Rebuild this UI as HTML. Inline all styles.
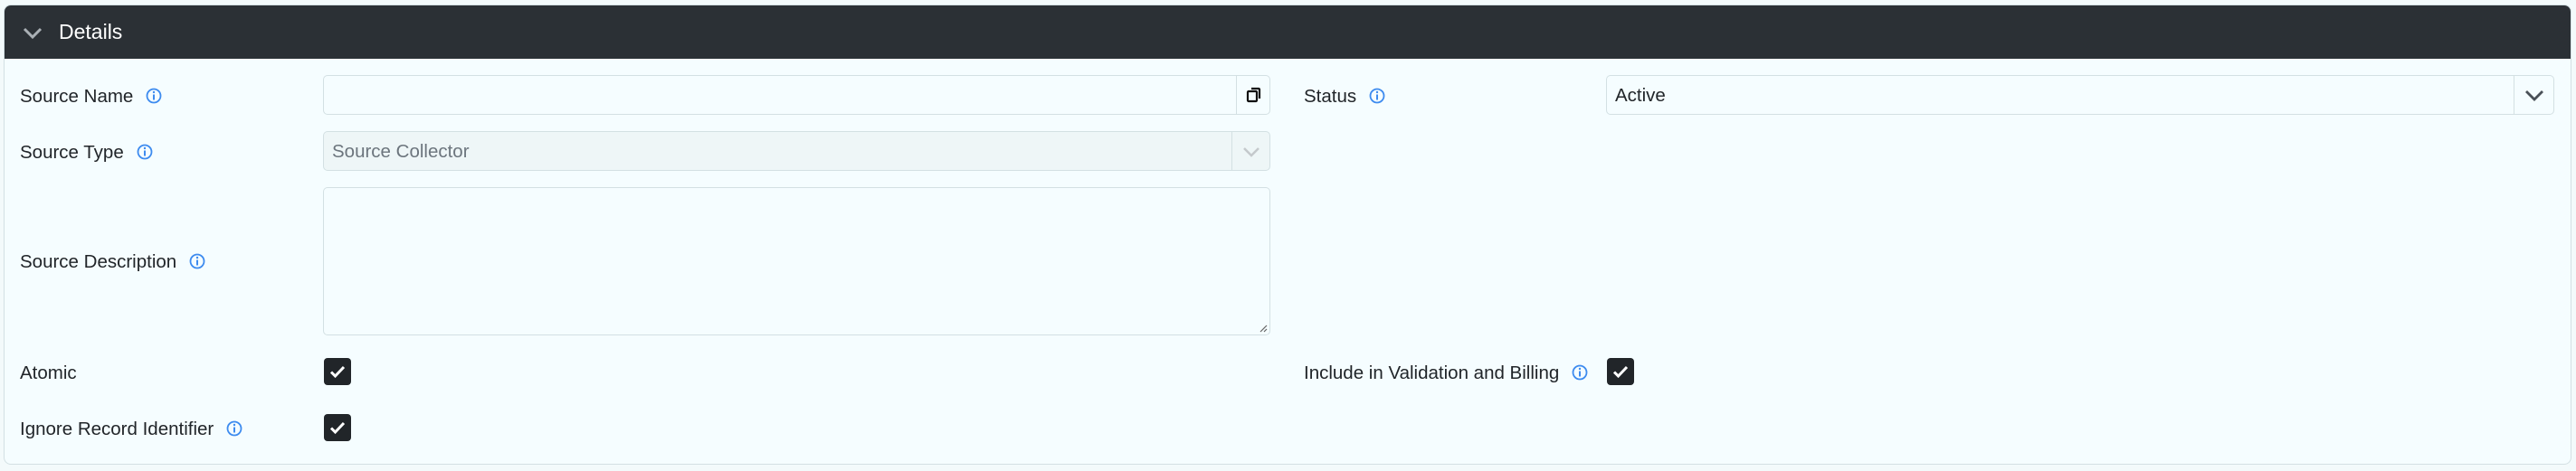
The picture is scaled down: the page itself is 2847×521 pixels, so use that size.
<!DOCTYPE html>
<html><head><style>
html,body{margin:0;padding:0;width:2847px;height:521px;background:#f3fafb;overflow:hidden;font-family:"Segoe UI","Liberation Sans",sans-serif;color:#212529}
.card{position:absolute;left:4px;top:5px;width:2836px;height:507px;border:1px solid #d3e0e3;border-radius:8px;background:#f5fdff;overflow:hidden}
.hdr{position:absolute;left:0;top:0;right:0;height:59px;background:#2b3035}
.hdr .t{position:absolute;left:60px;top:16px;font-size:23px;color:#fff}
.lbl{position:absolute;font-size:20.5px;line-height:24px;white-space:nowrap}
.lbl svg{vertical-align:-2px;margin-left:14px}
.box{position:absolute;border:1px solid #d3e0e3;border-radius:5px;background:#f5fdff;box-sizing:border-box}
.cb{position:absolute;width:30px;height:30px;background:#212529;border-radius:4px}
</style></head><body>
<div class="card">
<div class="hdr">
<svg style="position:absolute;left:20px;top:24px" width="22" height="14" viewBox="0 0 22 14"><path d="M2 2l9 9 9-9" fill="none" stroke="#aab0b5" stroke-width="3"/></svg>
<div class="t">Details</div>
</div>
</div>
<div class="lbl" style="left:22px;top:95px">Source Name<svg width="18" height="18" viewBox="0 0 18 18"><circle cx="9" cy="9" r="7.5" fill="none" stroke="#3d8bef" stroke-width="1.8"/><rect x="8" y="7.5" width="2" height="6" fill="#3d8bef"/><circle cx="9" cy="5" r="1.2" fill="#3d8bef"/></svg></div>
<div class="lbl" style="left:22px;top:157px">Source Type<svg width="18" height="18" viewBox="0 0 18 18"><circle cx="9" cy="9" r="7.5" fill="none" stroke="#3d8bef" stroke-width="1.8"/><rect x="8" y="7.5" width="2" height="6" fill="#3d8bef"/><circle cx="9" cy="5" r="1.2" fill="#3d8bef"/></svg></div>
<div class="lbl" style="left:22px;top:278px">Source Description<svg width="18" height="18" viewBox="0 0 18 18"><circle cx="9" cy="9" r="7.5" fill="none" stroke="#3d8bef" stroke-width="1.8"/><rect x="8" y="7.5" width="2" height="6" fill="#3d8bef"/><circle cx="9" cy="5" r="1.2" fill="#3d8bef"/></svg></div>
<div class="lbl" style="left:22px;top:401px">Atomic</div>
<div class="lbl" style="left:22px;top:463px">Ignore Record Identifier<svg width="18" height="18" viewBox="0 0 18 18"><circle cx="9" cy="9" r="7.5" fill="none" stroke="#3d8bef" stroke-width="1.8"/><rect x="8" y="7.5" width="2" height="6" fill="#3d8bef"/><circle cx="9" cy="5" r="1.2" fill="#3d8bef"/></svg></div>
<div class="lbl" style="left:1441px;top:95px">Status<svg width="18" height="18" viewBox="0 0 18 18"><circle cx="9" cy="9" r="7.5" fill="none" stroke="#3d8bef" stroke-width="1.8"/><rect x="8" y="7.5" width="2" height="6" fill="#3d8bef"/><circle cx="9" cy="5" r="1.2" fill="#3d8bef"/></svg></div>
<div class="lbl" style="left:1441px;top:401px">Include in Validation and Billing<svg width="18" height="18" viewBox="0 0 18 18"><circle cx="9" cy="9" r="7.5" fill="none" stroke="#3d8bef" stroke-width="1.8"/><rect x="8" y="7.5" width="2" height="6" fill="#3d8bef"/><circle cx="9" cy="5" r="1.2" fill="#3d8bef"/></svg></div>
<div class="box" style="left:357px;top:83px;width:1047px;height:44px">
<div style="position:absolute;right:0;top:0;width:36px;height:42px;border-left:1px solid #d3e0e3"></div>
<svg style="position:absolute;right:8px;top:12px" width="18" height="18" viewBox="0 0 18 18"><rect x="2" y="5" width="10" height="11" rx="1" fill="none" stroke="#111" stroke-width="2.2"/><path d="M6 2h8a1 1 0 0 1 1 1v10" fill="none" stroke="#111" stroke-width="2.2"/></svg>
</div>
<div class="box" style="left:357px;top:145px;width:1047px;height:44px;background:#eef6f7">
<div style="position:absolute;left:9px;top:10px;font-size:20.5px;color:#6c757d">Source Collector</div>
<div style="position:absolute;right:0;top:0;width:41px;height:42px;border-left:1px solid #d3e0e3"></div>
<svg style="position:absolute;right:10px;top:16px" width="20" height="12" viewBox="0 0 20 12"><path d="M2 2l8 8 8-8" fill="none" stroke="#c4c9cc" stroke-width="2.5"/></svg>
</div>
<div class="box" style="left:357px;top:207px;width:1047px;height:164px">
<svg style="position:absolute;right:2px;bottom:2px" width="10" height="10" viewBox="0 0 10 10"><path d="M9 2L2 9M9 6L6 9" stroke="#666" stroke-width="1.2"/></svg>
</div>
<div class="box" style="left:1775px;top:83px;width:1048px;height:44px">
<div style="position:absolute;left:9px;top:10px;font-size:20.5px">Active</div>
<div style="position:absolute;right:0;top:0;width:43px;height:42px;border-left:1px solid #d3e0e3"></div>
<svg style="position:absolute;right:10px;top:15px" width="22" height="13" viewBox="0 0 22 13"><path d="M2 2l9 9 9-9" fill="none" stroke="#495057" stroke-width="2.8"/></svg>
</div>
<div class="cb" style="left:358px;top:396px"><svg width="30" height="30" viewBox="0 0 30 30"><path d="M8 15.5l4.5 4.5L22 10" fill="none" stroke="#fff" stroke-width="3"/></svg></div>
<div class="cb" style="left:358px;top:458px"><svg width="30" height="30" viewBox="0 0 30 30"><path d="M8 15.5l4.5 4.5L22 10" fill="none" stroke="#fff" stroke-width="3"/></svg></div>
<div class="cb" style="left:1776px;top:396px"><svg width="30" height="30" viewBox="0 0 30 30"><path d="M8 15.5l4.5 4.5L22 10" fill="none" stroke="#fff" stroke-width="3"/></svg></div>
</body></html>
